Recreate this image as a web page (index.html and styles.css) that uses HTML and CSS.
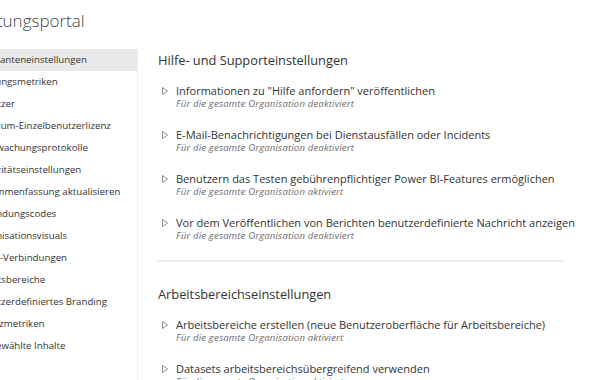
FILE: index.html
```html
<!DOCTYPE html>
<html>
<head>
    <title>Verwaltungsportal</title>
    <link rel="stylesheet" href="styles.css">
</head>
<body>
    <div class="header">
        <h1 class="title">Verwaltungsportal</h1>
    </div>

    <div class="layout">
        <!-- Linke Navigation -->
        <div class="sidebar">
            <ul class="nav">
                <li class="nav-item active">Mandanteneinstellungen</li>
                <li class="nav-item">Nutzungsmetriken</li>
                <li class="nav-item">Benutzer</li>
                <li class="nav-item">Premium-Einzelbenutzerlizenz</li>
                <li class="nav-item">Überwachungsprotokolle</li>
                <li class="nav-item">Kapazitätseinstellungen</li>
                <li class="nav-item">Zusammenfassung aktualisieren</li>
                <li class="nav-item">Einbindungscodes</li>
                <li class="nav-item">Organisationsvisuals</li>
                <li class="nav-item">Azure-Verbindungen</li>
                <li class="nav-item">Arbeitsbereiche</li>
                <li class="nav-item">Benutzerdefiniertes Branding</li>
                <li class="nav-item">Schutzmetriken</li>
                <li class="nav-item">Ausgewählte Inhalte</li>
            </ul>
        </div>

        <!-- Einstellungen -->
        <div class="content">
            <div class="section">
                <h2 class="section-title">Hilfe- und Supporteinstellungen</h2>

                <div class="setting">
                    <div class="setting-name">
                        <svg class="caret" width="6" height="8" viewBox="0 0 6 8"><path d="M0.5 0.5 L5.5 4 L0.5 7.5 Z" fill="none" stroke="#8a8a8a" stroke-width="1"/></svg>
                        Informationen zu "Hilfe anfordern" veröffentlichen
                    </div>
                    <div class="setting-state">Für die gesamte Organisation deaktiviert</div>
                </div>

                <div class="setting">
                    <div class="setting-name">
                        <svg class="caret" width="6" height="8" viewBox="0 0 6 8"><path d="M0.5 0.5 L5.5 4 L0.5 7.5 Z" fill="none" stroke="#8a8a8a" stroke-width="1"/></svg>
                        E-Mail-Benachrichtigungen bei Dienstausfällen oder Incidents
                    </div>
                    <div class="setting-state">Für die gesamte Organisation deaktiviert</div>
                </div>

                <div class="setting">
                    <div class="setting-name">
                        <svg class="caret" width="6" height="8" viewBox="0 0 6 8"><path d="M0.5 0.5 L5.5 4 L0.5 7.5 Z" fill="none" stroke="#8a8a8a" stroke-width="1"/></svg>
                        Benutzern das Testen gebührenpflichtiger Power BI-Features ermöglichen
                    </div>
                    <div class="setting-state">Für die gesamte Organisation aktiviert</div>
                </div>

                <div class="setting">
                    <div class="setting-name">
                        <svg class="caret" width="6" height="8" viewBox="0 0 6 8"><path d="M0.5 0.5 L5.5 4 L0.5 7.5 Z" fill="none" stroke="#8a8a8a" stroke-width="1"/></svg>
                        Vor dem Veröffentlichen von Berichten benutzerdefinierte Nachricht anzeigen
                    </div>
                    <div class="setting-state">Für die gesamte Organisation deaktiviert</div>
                </div>
            </div>

            <div class="divider"></div>

            <div class="section">
                <h2 class="section-title">Arbeitsbereichseinstellungen</h2>

                <div class="setting">
                    <div class="setting-name">
                        <svg class="caret" width="6" height="8" viewBox="0 0 6 8"><path d="M0.5 0.5 L5.5 4 L0.5 7.5 Z" fill="none" stroke="#8a8a8a" stroke-width="1"/></svg>
                        Arbeitsbereiche erstellen (neue Benutzeroberfläche für Arbeitsbereiche)
                    </div>
                    <div class="setting-state">Für die gesamte Organisation aktiviert</div>
                </div>

                <div class="setting">
                    <div class="setting-name">
                        <svg class="caret" width="6" height="8" viewBox="0 0 6 8"><path d="M0.5 0.5 L5.5 4 L0.5 7.5 Z" fill="none" stroke="#8a8a8a" stroke-width="1"/></svg>
                        Datasets arbeitsbereichsübergreifend verwenden
                    </div>
                    <div class="setting-state">Für die gesamte Organisation aktiviert</div>
                </div>
            </div>
        </div>
    </div>
</body>
</html>
```

FILE: styles.css
```css
html, body {
    height: 380px;
    overflow: hidden;
}

body {
    font-family: "Open Sans", Arial, sans-serif;
    margin: 0;
    background-color: white;
    color: #333333;
}

.header {
    height: 49px;
    box-sizing: border-box;
    padding-top: 8px;
}

.title {
    margin: 0 0 0 -54px;
    font-size: 17px;
    font-weight: 300;
    line-height: 26px;
    color: #444444;
}

.layout {
    display: flex;
}

.sidebar {
    width: 137px;
    flex-shrink: 0;
    border-right: 1px solid #eeeeee;
    height: 331px;
    overflow: hidden;
}

.nav {
    list-style: none;
    margin: 0;
    padding: 0;
}

.nav-item {
    height: 22px;
    line-height: 22px;
    font-size: 9.7px;
    white-space: nowrap;
    text-indent: -26px;
    color: #333333;
}

.nav-item.active {
    background-color: #eaeaea;
}

.content {
    padding-left: 20px;
}

.section-title {
    margin: 0 0 13px 0;
    font-size: 12.8px;
    font-weight: normal;
    line-height: 22px;
    color: #333333;
}

.setting {
    margin-bottom: 18px;
    padding-left: 4px;
}

.setting-name {
    display: flex;
    align-items: center;
    gap: 8px;
    font-size: 11px;
    line-height: 14px;
    white-space: nowrap;
}

.caret {
    flex-shrink: 0;
}

.setting-state {
    padding-left: 14px;
    font-size: 9.6px;
    font-style: italic;
    line-height: 12px;
    letter-spacing: 0.15px;
    color: #6e6e6e;
}

.divider {
    width: 407px;
    height: 2px;
    background-color: #ededed;
    margin: 2px 0 21px -1px;
}
```
